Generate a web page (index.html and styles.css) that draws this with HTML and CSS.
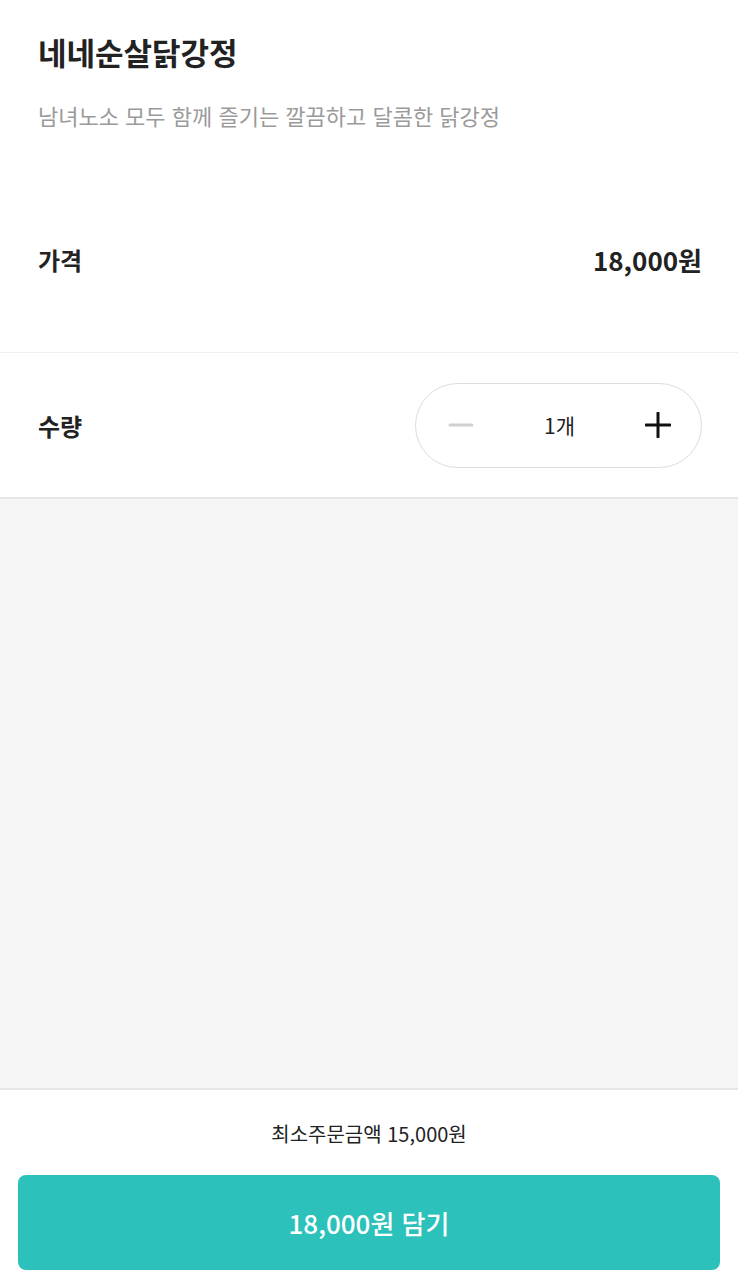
FILE: index.html
```html
<!DOCTYPE html>
<html lang="ko">
<head>
  <meta charset="UTF-8">
  <meta name="viewport" content="width=device-width, initial-scale=1.0">
  <title>네네순살닭강정</title>
  <link rel="stylesheet" href="styles.css">
</head>
<body>
  <div class="page">
    <!-- 메뉴 정보 -->
    <div class="menu-header">
      <h1 class="menu-title">네네순살닭강정</h1>
      <p class="menu-desc">남녀노소 모두 함께 즐기는 깔끔하고 달콤한 닭강정</p>
    </div>

    <!-- 가격 -->
    <div class="row price-row">
      <span class="row-label">가격</span>
      <span class="price">18,000원</span>
    </div>

    <!-- 수량 -->
    <div class="row qty-row">
      <span class="row-label">수량</span>
      <div class="stepper">
        <button class="step-btn minus" aria-label="빼기">
          <svg width="26" height="26" viewBox="0 0 26 26"><path d="M2 13h22" stroke="#d0d0d0" stroke-width="3" stroke-linecap="round"/></svg>
        </button>
        <span class="qty">1개</span>
        <button class="step-btn plus" aria-label="더하기">
          <svg width="26" height="26" viewBox="0 0 26 26"><path d="M1 13h24M13 1v24" stroke="#111" stroke-width="3" stroke-linecap="round"/></svg>
        </button>
      </div>
    </div>

    <div class="filler"></div>

    <!-- 하단 -->
    <div class="footer">
      <p class="min-order">최소주문금액 15,000원</p>
      <button class="cart-btn">18,000원 담기</button>
    </div>
  </div>
</body>
</html>
```

FILE: styles.css
```css
/* 기본 스타일 */
body {
  margin: 0;
  font-family: "Noto Sans CJK KR", "Noto Sans", sans-serif;
  background-color: #ffffff;
  color: #222;
}
.page {
  display: flex;
  flex-direction: column;
  height: 100vh;
}
.menu-header {
  padding: 28px 38px 43px;
}
.menu-title {
  margin: 0;
  font-size: 31px;
  line-height: 48px;
  font-weight: 700;
  color: #222;
}
.menu-desc {
  margin: 22px 0 0;
  font-size: 22px;
  line-height: 34px;
  color: #9a9a9a;
}
.row {
  display: flex;
  justify-content: space-between;
  align-items: center;
  padding: 0 36px 0 38px;
}
.price-row {
  height: 178px;
  padding-bottom: 8px;
  box-sizing: border-box;
  border-bottom: 1px solid #eeeeee;
}
.qty-row {
  height: 144px;
  border-bottom: 2px solid #e6e6e6;
}
.row-label {
  font-size: 24px;
  font-weight: 700;
  color: #222;
}
.price {
  font-size: 26px;
  font-weight: 700;
  color: #222;
}

/* 수량 버튼 */
.stepper {
  display: flex;
  align-items: center;
  justify-content: space-between;
  width: 287px;
  height: 85px;
  border: 1px solid #dddddd;
  border-radius: 43px;
  padding: 0 30px 0 32px;
  box-sizing: border-box;
}
.step-btn {
  display: flex;
  align-items: center;
  justify-content: center;
  width: 26px;
  height: 26px;
  padding: 0;
  background: none;
  border: none;
  cursor: pointer;
}
.qty {
  font-size: 21px;
  color: #222;
}

.filler {
  flex: 1;
  background-color: #f5f5f5;
}

/* 하단 영역 */
.footer {
  border-top: 2px solid #e6e6e6;
  padding: 30px 18px 10px;
  background-color: #ffffff;
}
.min-order {
  margin: 0 0 27px;
  font-size: 20px;
  line-height: 28px;
  text-align: center;
  color: #222;
}
.cart-btn {
  display: block;
  width: 100%;
  height: 95px;
  border: none;
  border-radius: 8px;
  background-color: #2cc1bb;
  color: #ffffff;
  font-family: inherit;
  font-size: 26px;
  font-weight: 500;
  cursor: pointer;
}
```
